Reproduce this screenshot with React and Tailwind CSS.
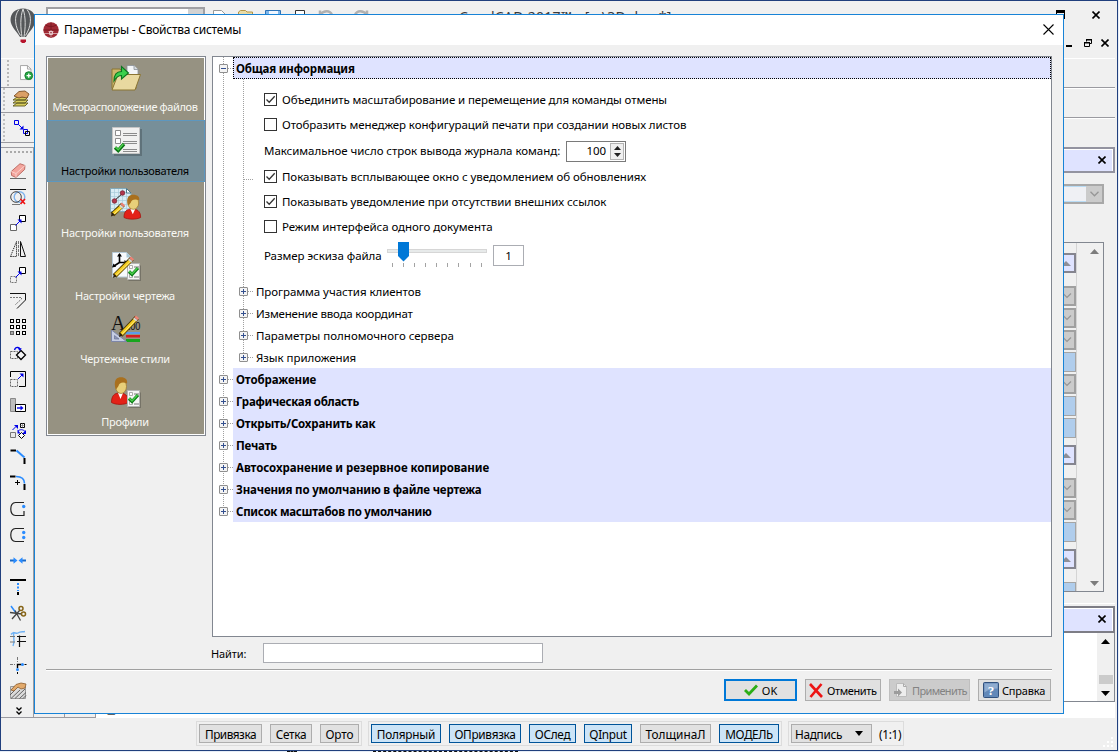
import React from "react";

const UI = "font-['Noto_Sans','Open_Sans',sans-serif]";

/* ---------- small drawing helpers ---------- */

function Icon16({ children }) {
  return (
    <svg width="16" height="16" viewBox="0 0 16 16" fill="none" className="block shrink-0 overflow-visible">
      {children}
    </svg>
  );
}

function Icon32({ children }) {
  return (
    <svg width="32" height="32" viewBox="0 0 32 32" fill="none" className="block shrink-0 overflow-visible">
      {children}
    </svg>
  );
}

const BLUE = "#0000e8";
const SKY = "#2a8cff";

/* ---------- left toolbar icons ---------- */

const toolIcons = [
  <g key="eraser">
    <path d="M0 15.5H16" stroke="#6b6b6b" />
    <path d="M10 .7 15 2.5 14.6 6.5 6 14.5 1.6 12.5 1.2 8.5Z" fill="#f3a49c" stroke="#b0584f" strokeWidth=".8" />
    <path d="M1.2 8.5 6 10.5 6 14.5 M6 10.5 15 2.5" stroke="#fbd6d1" strokeWidth=".9" />
  </g>,
  <g key="discard">
    <path d="M0 .5H16" stroke="#111" />
    <circle cx="9.5" cy="8" r="5.3" stroke="#7fb4ee" strokeWidth="1.4" />
    <circle cx="6" cy="8" r="5.3" stroke="#444" />
    <path d="M2 15.5h8" stroke="#777" />
    <path d="m10.5 10 4.5 5m0-5-4.5 5" stroke="#f01010" strokeWidth="1.6" />
  </g>,
  <g key="copy">
    <path d="M.5 9.5h6v6h-6z" fill="#fff" stroke="#666" />
    <path d="M9.5.5h6v6h-6z" fill="#fff" stroke="#000" />
    <path d="M5.5 10.5 10.5 5.5" stroke={BLUE} />
    <path d="M7.5 4.5h4v4z" fill={BLUE} />
  </g>,
  <g key="mirror">
    <path d="M.5 15.5 6.5.5V15.5z" stroke="#000" strokeDasharray="1 1" />
    <path d="M8.5 0V16" stroke="#777" strokeDasharray="3 1" />
    <path d="M10.5.5V15.5H15.5z" stroke="#111" />
  </g>,
  <g key="move">
    <path d="M.5 9.5h6v6h-6z" stroke="#777" strokeDasharray="2 1" />
    <path d="M9.5.5h6v6h-6z" fill="#fff" stroke="#000" />
    <path d="M5.5 10.5 10.5 5.5" stroke={BLUE} />
    <path d="M7.5 4.5h4v4z" fill={BLUE} />
  </g>,
  <g key="offset">
    <path d="M0 .5H15.5V7L7 15.5" stroke="#111" />
    <path d="M0 4.5H11.5V6L5 12" stroke="#777" strokeDasharray="2 1" />
  </g>,
  <g key="pattern">
    {[0, 6, 12].map((y) =>
      [0, 6, 12].map((x) => (
        <rect key={`${x}-${y}`} x={x + 0.5} y={y + 0.5} width="3" height="3" fill={x === 0 && y === 12 ? "#aaa" : "#fff"} stroke={x === 0 && y === 12 ? "#666" : "#000"} />
      ))
    )}
  </g>,
  <g key="rotate" transform="translate(0 1)">
    <path d="M.5 5.5h7v7h-7z" stroke="#666" strokeDasharray="2 1" />
    <path d="m11 4.5 4.5 4.5L11 13.500 6.500 9z" fill="#f4f4f4" stroke="#000" strokeWidth="1.300" />
    <path d="M4.500 4c1-3.500 5-3.500 5.500-.5" stroke={BLUE} strokeWidth="1.300" />
    <path d="M7.500 2.300h4.200L10 5z" fill={BLUE} />
  </g>,
  <g key="scale">
    <path d="M.5 6V.5h15v15H9" stroke="#000" />
    <path d="M.5 8.5h7v7h-7z" stroke="#666" strokeDasharray="2 1" />
    <path d="M8 8 12 4" stroke={BLUE} />
    <path d="M9.5 2.5h4v4z" fill={BLUE} />
  </g>,
  <g key="stretch">
    <path d="M.5 1.5h5v13h-5z" fill="#bdbdbd" stroke="#8a8a8a" />
    <path d="M5.5 7.5h10v7h-10z" fill="#fff" stroke="#000" />
    <path d="M7 11h4" stroke={BLUE} strokeWidth="1.4" />
    <path d="m10.5 8.5 3 2.5-3 2.5z" fill={BLUE} />
  </g>,
  <g key="transform">
    <path d="M.5 9.5h5v5h-5z" fill="#e8e8e8" stroke="#777" />
    <path d="M10.5.5h4v4h-4z" fill="#fff" stroke="#000" />
    <path d="M12.5 .5v4M10.5 2.5h4" stroke="#777" strokeWidth=".7" />
    <path d="M2.5 7 6 3.5" stroke={BLUE} />
    <path d="M4 2h4v4z" fill={BLUE} />
    <path d="m11.5 9.500 3 3-3 3-3-3z" fill="#fff" stroke="#000" />
    <path d="M8 8c2-1.800 5-1.800 7 .5" stroke={BLUE} />
    <path d="M7.500 6.500v4h3zM16 7v4h-4z" fill={BLUE} />
  </g>,
  <g key="chamfer">
    <path d="M.5 1.5H6" stroke="#000" strokeWidth="2" />
    <path d="M6.5 1.5 14.5 8.5" stroke={SKY} strokeWidth="2" />
    <path d="M14.5 9v6" stroke="#000" strokeWidth="2" />
  </g>,
  <g key="fillet">
    <path d="M0 1.5H5.5" stroke="#000" strokeWidth="2" />
    <path d="M6 1.5c6 0 8.5 2.5 8.5 7" stroke={SKY} strokeWidth="1.6" />
    <path d="M14.5 9v6" stroke="#000" strokeWidth="2" />
    <path d="M7.5 5v5M5 7.5h5" stroke="#000" />
  </g>,
  <g key="split-one">
    <path d="M14 1.5H5.5C-.8 2-.8 14 5.5 14.5H14V10" stroke="#222" strokeWidth="1.2" />
    <circle cx="13.7" cy="5.5" r="1.7" fill={SKY} />
  </g>,
  <g key="split-two">
    <path d="M14 1.5H5.5C-.8 2-.8 14 5.5 14.5H14" stroke="#222" strokeWidth="1.2" />
    <circle cx="13.7" cy="5.5" r="1.7" fill={SKY} />
    <circle cx="13.7" cy="10.5" r="1.7" fill={SKY} />
  </g>,
  <g key="weld" transform="translate(0 -.5)">
    <path d="M0 8h4M12 8h4" stroke="#1768c8" strokeWidth="2" />
    <path d="m3.500 4.700 4 3.300-4 3.300zM12.500 4.700 8.500 8l4 3.300z" fill={SKY} />
  </g>,
  <g key="extend">
    <path d="M0 1H16" stroke="#000" strokeWidth="2" />
    <path d="M8 4v8" stroke={SKY} strokeWidth="2" strokeDasharray="2 1.5" />
    <path d="M8 13v3" stroke="#000" strokeWidth="2" />
  </g>,
  <g key="trim">
    <path d="M1 1 6 8" stroke={SKY} strokeWidth="1.5" />
    <path d="M0 7.5 12 9M2 14 10 5M10.5 15.5 5 5.5" stroke="#444" strokeWidth="1.3" />
    <circle cx="11" cy="3.5" r="2" stroke="#866418" strokeWidth="1.5" />
    <circle cx="13.5" cy="9" r="2" stroke="#866418" strokeWidth="1.5" />
  </g>,
  <g key="edge-trim">
    <path d="M1 3.500c3-4 5 0 7-1.500s4-1 7-1.500M4 1c-2 5 2 6-1 14" stroke="#70b2f4" strokeWidth="1.4" />
    <path d="M7 5.5h9M7 10.5h9M9.5 4.500V16" stroke="#111" strokeWidth="1.2" />
    <path d="M0 5.5h5M0 11h5" stroke="#777" />
  </g>,
  <g key="node">
    <path d="M7.5 0v5M0 7.5h5" stroke="#777" strokeDasharray="3 1" />
    <path d="M7.5 11V7.5h4" stroke="#000" strokeWidth="1.4" />
    <path d="M14.5 7.5h2M7.5 15v2" stroke="#000" />
    <circle cx="12.5" cy="7.5" r="1.5" fill={SKY} />
    <circle cx="7.5" cy="12.5" r="1.5" fill={SKY} />
  </g>,
  <g key="hatch-edit">
    <path d="M.5 3.5h15v12H.5z" fill="#dadada" stroke="#999" />
    <path d="m0 12 5-5M1 15.5 10 7M5 15.5 15 6M9.5 15.5 16 9.5M13 15.5l3-3" stroke="#555" strokeWidth=".9" />
    <path d="M1 7 6 1.5 11 0l5 1-1 4-4 1-3-2-4 4z" fill="#e2aa6c" stroke="#8b5a2b" strokeWidth=".8" />
  </g>,
];

/* ---------- option page icons ---------- */

function Pencil({ from, to }) {
  const [x1, y1] = from;
  const [x2, y2] = to;
  return (
    <g>
      <path d={`M${x1 + 1.5} ${y1 - 2}L${x2} ${y2}`} stroke="#4c3a05" strokeWidth="5" />
      <path d={`M${x1 + 2} ${y1 - 2.5}L${x2 - 2} ${y2 + 2.4}`} stroke="#f5cd1d" strokeWidth="3.4" />
      <path d={`M${x1 + 2.4} ${y1 - 2}L${x2 - 1.6} ${y2 + 2.8}`} stroke="#fff0a0" strokeWidth=".8" />
      <path d={`M${x2 - 2.4} ${y2 + 2.8}L${x2 - 1} ${y2 + 1.2}`} stroke="#d7d7d7" strokeWidth="4" />
      <path d={`M${x2 - 1} ${y2 + 1.2}L${x2 + 0.5} ${y2 - 0.6}`} stroke="#ef8274" strokeWidth="4.2" />
      <path d={`M${x1} ${y1}L${x1 + 0.8} ${y1 - 4.5} ${x1 + 4} ${y1 - 1.8}z`} fill="#30220c" />
    </g>
  );
}

function ChecklistBadge() {
  return (
    <g>
      <path d="M18.500 14.500h12.500v15.500H18.500z" fill="#55534b" opacity=".5" />
      <path d="M17.500 12.500h12v16h-12z" fill="#f5f5f5" stroke="#b5b5b5" />
      <path d="M19.500 14.500h3v3h-3zM19.500 23.500h3v3h-3z" fill="#fff" stroke="#999" strokeWidth=".8" />
      <path d="M24 16h5M24 26h5" stroke="#777" />
      <path d="m19 20.500 3 3 6-6.500" stroke="#0c7c18" strokeWidth="3.200" />
      <path d="m19 20 3 3 5.500-6" stroke="#49cf4b" strokeWidth="1.400" />
    </g>
  );
}

function Person({ x = 0, y = 0 }) {
  return (
    <g transform={`translate(${x} ${y})`}>
      <path d="M1 25.500c0-7 3-9.500 8-9.500s9 2 9 9.500c-4 2.500-13 2.500-17 0z" fill="#e32118" stroke="#a3120d" strokeWidth=".8" />
      <path d="m7.500 16 2.500 6 2.500-6z" fill="#fff" />
      <ellipse cx="10.500" cy="9.500" rx="5.500" ry="7" fill="#e8cf79" stroke="#9b7426" strokeWidth=".7" />
      <path d="M4.500 9.500C3.500 2.500 6.500.2 10.500.2s7 2.300 6 6.300C12.500 4.500 8.500 5.500 8 9l-2.500 3.500z" fill="#a9701e" />
    </g>
  );
}

const pageIcons = {
  folder: (
    <Icon32>
      <path d="M2 6h8l2 2.500h14v17H2z" fill="#cdb66b" stroke="#8a7433" />
      <path d="M17 2.500h7l4 4V20H17z" fill="#f4f6f8" stroke="#8c9298" strokeWidth=".8" />
      <path d="M24 2.500v4h4" fill="#d5dbe0" stroke="#8c9298" strokeWidth=".8" />
      <path d="M8 11.500h22.500l-5.500 15.500H2z" fill="#e9d9a0" stroke="#8a7433" />
      <path d="M4 18c0-7 3-9.500 7.500-9.500V3.500L18.500 10l-7 6v-3.500c-4 0-5.500 2-7.500 5.500z" fill="#3bd04c" stroke="#0d7420" strokeWidth="1.1" />
    </Icon32>
  ),
  checklist: (
    <Icon32>
      <path d="M4 3h28v27H4z" fill="#47565c" opacity=".5" />
      <path d="M2.5 1.5h27v26h-27z" fill="#f1f1f0" stroke="#c4c4c4" />
      <path d="M5.5 4.5h5v5h-5zM5.5 12.5h5v5h-5z" fill="#fff" stroke="#8d8d8d" />
      <path d="M13 7.5h14M13 9.5h14M13 15.5h14M13 17.5h14M13 23.5h14M13 25.5h14" stroke="#8b8b8b" />
      <path d="m5 21.5 3.2 3L14 18" stroke="#0a7414" strokeWidth="3.4" />
      <path d="m5.3 21 3 2.7L13.3 18" stroke="#4dd04d" strokeWidth="1.4" />
    </Icon32>
  ),
  user: (
    <Icon32>
      <path d="M.5.5h16l4.5 4.500v18.500H.5z" fill="#d9edf6" stroke="#84aabb" />
      <path d="M4.500 1v22M8.500 1v22M12.500 1v22M16.500 5v18M1 4.500h19M1 8.500h19M1 12.500h19M1 16.500h19M1 20.500h19" stroke="#a7ccdb" strokeWidth=".7" />
      <path d="m16.500.5 4.500 4.500h-4.500z" fill="#fff" stroke="#4d7a8c" />
      <path d="m4 13 9-8" stroke="#222" />
      <circle cx="4.500" cy="13" r="2.300" fill="#b2374d" stroke="#701b2b" strokeWidth=".7" />
      <circle cx="12.500" cy="5" r="2.300" fill="#b2374d" stroke="#701b2b" strokeWidth=".7" />
      <g transform="translate(13 6.500) scale(.98 .9)">
        <Person />
      </g>
      <Pencil from={[1, 28.5]} to={[13, 16.5]} />
    </Icon32>
  ),
  drafting: (
    <Icon32>
      <path d="M2.5 1.5h14l5 5v19.500h-19z" fill="#f7fafc" stroke="#b7cbd8" />
      <path d="m16.5 1.500 5 5h-5z" fill="#a9c7d6" />
      <path d="M9.500 11.500V3M9.500 11.500H16M9.500 11.500 4 15" stroke="#000" strokeWidth="1.600" />
      <path d="M7 5.500 9.500 2 12 5.500zM2 16.500l1.500-4 2.700 3.200zM14.500 9l3 2.500-3 2.500z" fill="#000" />
      <ChecklistBadge />
      <Pencil from={[3, 27]} to={[22, 7.5]} />
    </Icon32>
  ),
  styles: (
    <Icon32>
      <text x="1" y="15.5" fontSize="20" fill="#111" fontFamily="Liberation Serif, serif">A</text>
      <text transform="translate(18 16) scale(.8 1)" fontSize="11.500" fill="#111" fontFamily="Liberation Sans, sans-serif">.00</text>
      <path d="M16 18h14v2H16z" fill="#5b9bea" />
      <path d="M16 21h14v2.5H16z" fill="#d61c1c" />
      <path d="M16 25h14v3H16z" fill="#18a51e" />
      <path d="M1.500 16v11.500h15z" fill="#c5cce2" stroke="#7d86a8" />
      <path d="M4.500 21.500v3.500H9z" fill="#8f97b5" stroke="#6a7396" strokeWidth=".7" />
      <Pencil from={[9, 23]} to={[27, 3.5]} />
    </Icon32>
  ),
  profiles: (
    <Icon32>
      <Person x={0.5} y={0} />
      <g transform="translate(0 1)">
        <ChecklistBadge />
      </g>
    </Icon32>
  ),
};

/* ---------- main window behind the dialog ---------- */

function Balloon() {
  return (
    <svg width="26" height="36" viewBox="0 0 26 36" fill="none" className="block">
      <path d="M13 .5C5 .5.5 5.500.5 12 .5 18 7 24 10 29h6c3-5 9.500-11 9.500-17C25.500 5.500 21 .5 13 .5z" fill="#55575a" />
      <path d="M9 1.500C3.500 8 5 19 10.500 27.500M17 1.500C22.500 8 21 19 15.500 27.500M13 1c-3 8-2.500 19-1 28M13 1c3 8 2.500 19 1 28" stroke="#d8d8d8" strokeWidth="1" />
      <path d="M10.500 31.500h5.500v2L14.500 35h-2.500l-1.500-1.500z" fill="#b7142c" />
    </svg>
  );
}

function LeftToolbars() {
  return (
    <div className="flex w-[33px] shrink-0 flex-col">
      <div className="flex h-[57px] flex-col pl-[9px] pt-[7px]">
        <Balloon />
      </div>
      <div className="flex h-[30px] items-center border-b border-[#9a9aa0] border-t border-t-white pl-[6px]">
        <div className="h-[26px] border-l-2 border-dotted border-[#b8b8b8]" />
        <svg width="16" height="18" viewBox="0 0 16 18" className="ml-[11px]" fill="none">
          <path d="M.5.5h8l4 4v12H.5z" fill="#fff" stroke="#9b9b9b" />
          <path d="M8.5.5v4h4" stroke="#9b9b9b" />
          <circle cx="10" cy="12" r="4.5" fill="#28a745" stroke="#147a2c" />
          <path d="M10 9.5v5M7.5 12h5" stroke="#fff" strokeWidth="1.5" />
        </svg>
      </div>
      <div className="flex h-[25px] items-center border-b border-[#9a9aa0] pb-[2px] pl-[2px]">
        <div className="h-[22px] border-l-2 border-dotted border-[#c0c0c0]" />
        <svg width="18" height="18" viewBox="0 0 18 18" className="ml-[7px]" fill="none">
          <path d="m1 10 4-3h11l-3 3zM1 13l4-3h11l-3 3zM1 16l4-3h11l-3 3z" fill="#d6cb5b" stroke="#5f5a20" strokeWidth=".9" />
          <path d="M2 6 7 1.5 13 1l4 3-2 4-5-1-3 1z" fill="#dba066" stroke="#7a4f25" strokeWidth=".9" />
        </svg>
      </div>
      <div className="flex h-[30px] items-center border-b border-[#9a9aa0] pl-[2px]">
        <div className="h-[27px] border-l-2 border-dotted border-[#c0c0c0]" />
        <svg width="16" height="16" viewBox="0 0 16 16" className="ml-[9px]" fill="none">
          <path d="M.5.5h4v4h-4zM9.5 9.5h4v4h-4z" stroke={BLUE} />
          <path d="M11.500 11.500h4v4h-4z" stroke="#000" />
          <path d="m4.500 4.500 4 4" stroke={BLUE} />
          <path d="M9.500 5.500v4h-4z" fill={BLUE} />
        </svg>
      </div>
      <div className="h-[5px] border-b border-[#9a9aa0]" />
      <div className="flex grow flex-col border-b border-r border-[#9a9aa0]">
        <div className="ml-[5px] mt-[3px] w-[26px] border-t-2 border-dotted border-[#aaa]" />
        <div className="flex flex-col gap-[10px] pl-[9px] pt-[10px]">
          {toolIcons.map((icon) => (
            <Icon16 key={icon.key}>{icon}</Icon16>
          ))}
        </div>
        <svg width="6" height="8" viewBox="0 0 6 8" fill="none" className="ml-[15px] mt-[8px] block">
          <path d="m.5.5 2.500 2.500L5.500.5M.5 4.500 3 7l2.500-2.500" stroke="#000" strokeWidth="1.3" />
        </svg>
      </div>
    </div>
  );
}

function TopChrome() {
  return (
    <div className="flex h-[14px] items-start pl-[12px] pt-[6px]">
      <div className="flex h-[20px] w-[159px] shrink-0 justify-end border-2 border-[#a0a0a4] bg-white">
        <div className="w-[15px] bg-[#d2d2d2]" />
      </div>
      <svg width="170" height="20" viewBox="0 0 170 20" fill="none" className="ml-[8px] shrink-0">
        <path d="M.5 20V3.500h8l4 4V20" fill="#fff" stroke="#999" />
        <path d="M25.500 20V5l2-1.500h5L34 5h5.500V20" fill="#e9dca8" stroke="#b49646" />
        <path d="M52.500 20V3.500h15V20z" fill="#7eb6ea" stroke="#2e73b6" />
        <path d="M56 4h9v5h-9z" fill="#f0f6ff" />
        <path d="M82.500 20V3.500h9V20" fill="#fff" stroke="#333" />
        <path d="M107 3.500v6M107 8c4-5 10-5 12 0" stroke="#b0b0b0" strokeWidth="2.5" />
        <path d="M154 3.500v6M154 8c-4-5-10-5-12 0" stroke="#b0b0b0" strokeWidth="2.5" />
      </svg>
      <div className="ml-[76px] mt-[3px] whitespace-pre text-[14px] leading-[14px] tracking-[0.3px] text-[#3a3a3a]">
        CorelCAD 2017™ - [...\3D.dwg*]
      </div>
    </div>
  );
}

const CloseGlyph = () => (
  <svg width="8" height="8" viewBox="0 0 8 8" fill="none" className="block shrink-0">
    <path d="m.5.5 7 7m0-7-7 7" stroke="#000" strokeWidth="1.6" />
  </svg>
);

function PaletteField({ kind }) {
  if (kind === "head") {
    return (
      <div className="flex h-[20px] shrink-0 items-center border-2 border-l-0 border-[#85858f] bg-[#dfe3ff]">
        <svg width="8" height="5" viewBox="0 0 8 5" className="block">
          <path d="M3 0 8 5H0V3z" fill="#8e8e96" />
        </svg>
      </div>
    );
  }
  if (kind === "edit") {
    return <div className="h-[20px] shrink-0 border border-l-0 border-[#a5a5a5] bg-[#b0cdec]" />;
  }
  return (
    <div className="flex h-[20px] shrink-0 items-center border-2 border-l-0 border-[#a0a0a0] bg-[#cbcbcb]">
      <svg width="9" height="6" viewBox="0 0 9 6" fill="none" className="block">
        <path d="m0 .5 4 4 4-4" stroke="#969696" strokeWidth="1.2" />
      </svg>
    </div>
  );
}

function RightDock() {
  return (
    <div className="flex w-[54px] shrink-0 flex-col pr-[2px]">
      <div className="flex h-[29px] items-start pl-[29px] pt-[10px]">
        <CloseGlyph />
      </div>
      <div className="flex h-[28px] items-start pl-[3px] pt-[9px]">
        <div className="mt-[6px] h-[2px] w-[6px] bg-black" />
        <svg width="8" height="8" viewBox="0 0 8 8" fill="none" className="ml-[12px] block overflow-visible">
          <path d="M2.500 2.500v-2h5v4h-2M.5 3.500h5v4h-5z" stroke="#000" />
          <path d="M2 .7h6M0 3.700h6" stroke="#000" strokeWidth="1.5" />
        </svg>
        <div className="ml-[9px]">
          <CloseGlyph />
        </div>
      </div>
      <div className="h-[30px] shrink-0 border-b border-t border-b-[#9a9aa0] border-t-white" />
      <div className="h-[30px] shrink-0 border-b border-t border-b-[#9a9aa0] border-t-white" />
      <div className="h-[29px] shrink-0 border-t border-t-white" />
      <div className="flex h-[26px] shrink-0 items-center justify-end border-2 border-l-0 border-[#9393a0] bg-[#dfe3ff] pb-px pr-[7px] shadow-[inset_-1px_1px_0_#fff]">
        <CloseGlyph />
      </div>
      <div className="mr-[11px] mt-[11px] flex h-[20px] shrink-0 items-stretch justify-end border-2 border-l-0 border-[#a8a8a8] bg-[#eff0f4] shadow-[inset_0_1px_0_#b9dcf5,inset_0_-1px_0_#b9dcf5]">
        <div className="flex w-[16px] items-center justify-center bg-[#cbcbcb]">
          <svg width="9" height="6" viewBox="0 0 9 6" fill="none">
            <path d="m.5.8 4 4 4-4" stroke="#969696" strokeWidth="1.3" />
          </svg>
        </div>
      </div>
      <div className="mr-[11px] mt-[38px] flex h-[350px] shrink-0 border border-l-0 border-[#828790]">
        <div className="flex w-[14px] flex-col overflow-hidden border-r border-[#d4d4d4] pt-[10px]">
          <PaletteField kind="head" />
          <div className="mt-[13px] flex flex-col gap-[2px]">
            {["combo", "combo", "combo", "edit", "combo", "edit", "edit"].map((k, i) => (
              <PaletteField key={i} kind={k} />
            ))}
          </div>
          <div className="mt-[7px]">
            <PaletteField kind="head" />
          </div>
          <div className="mt-[13px] flex flex-col gap-[2px]">
            {["combo", "combo", "edit"].map((k, i) => (
              <PaletteField key={i} kind={k} />
            ))}
          </div>
          <div className="mt-[7px]">
            <PaletteField kind="head" />
          </div>
          <div className="mt-[13px]">
            <PaletteField kind="edit" />
          </div>
        </div>
        <div className="flex w-[26px] flex-col items-center justify-between pb-[5px] pl-[9px] pt-[6px]">
          <svg width="9" height="5" viewBox="0 0 9 5">
            <path d="m4.500 0 4.500 5H0z" fill="#7c7c7c" />
          </svg>
          <svg width="9" height="5" viewBox="0 0 9 5">
            <path d="M0 0h9L4.500 5z" fill="#7c7c7c" />
          </svg>
        </div>
      </div>
      <div className="mt-[11px] h-px bg-white" />
      <div className="mt-[2px] flex h-[27px] shrink-0 items-center justify-end border-2 border-l-0 border-[#7d7d86] bg-[#dfe3ff] pb-[2px] pr-[7px] shadow-[inset_-1px_1px_0_#fff]">
        <CloseGlyph />
      </div>
      <div className="flex h-[69px] shrink-0 justify-end border-b border-r border-[#828790] bg-white">
        <div className="flex w-[17px] flex-col items-center bg-[#f0f0f0] pt-[6px]">
          <svg width="9" height="5" viewBox="0 0 9 5" className="shrink-0">
            <path d="m4.500 0 4.500 5H0z" fill="#000" />
          </svg>
          <div className="mt-[31px] h-[9px] w-[14px] shrink-0 bg-[#cbcbcb]" />
          <svg width="9" height="5" viewBox="0 0 9 5" className="mt-[7px] shrink-0">
            <path d="M0 0h9L4.500 5z" fill="#000" />
          </svg>
        </div>
      </div>
      <div className="grow bg-white" />
    </div>
  );
}

const statusOff = "flex items-center justify-center border border-[#adadad] bg-[#e1e1e1] whitespace-nowrap";
const statusOn = "flex items-center justify-center border border-[#005499] bg-[#cce4f7] whitespace-nowrap pt-px";

function StatusBar() {
  return (
    <div className="flex h-[32px] shrink-0 items-start pl-[195px] pt-[3px] text-[11.8px] leading-[16px] tracking-[-0.3px] text-black">
      <div className="flex h-[25px] w-[166px] gap-[8px] border border-[#dcdcdc] px-[2px] py-[2px]">
        <div className={`${statusOff} w-[63px] tracking-[-0.5px]`}>Привязка</div>
        <div className={`${statusOff} w-[42px]`}>Сетка</div>
        <div className={`${statusOff} w-[39px] tracking-[-0.1px]`}>Орто</div>
      </div>
      <div className="ml-[6px] flex h-[25px] w-[414px] gap-[8px] border border-[#dcdcdc] px-[2px] py-[2px]">
        <div className={`${statusOn} w-[70px] tracking-[-0.2px]`}>Полярный</div>
        <div className={`${statusOn} w-[72px]`}>ОПривязка</div>
        <div className={`${statusOn} w-[47px]`}>ОСлед</div>
        <div className={`${statusOn} w-[48px]`}>QInput</div>
        <div className={`${statusOff} w-[71px] tracking-[0px]`}>ТолщинаЛ</div>
        <div className={`${statusOn} w-[60px] tracking-[-0.4px]`}>МОДЕЛЬ</div>
      </div>
      <div className="ml-[6px] flex h-[25px] w-[116px] items-stretch border border-[#dcdcdc] px-[2px] py-[2px]">
        <div className="flex w-[81px] shrink-0 items-center justify-between border border-[#adadad] bg-[#e1e1e1] pl-[3px] pr-[8px]">
          <span className="pt-px">Надпись</span>
          <svg width="8" height="5" viewBox="0 0 8 5">
            <path d="M0 0h8L4 5z" fill="#000" />
          </svg>
        </div>
        <span className="ml-[7px] flex items-center">(1:1)</span>
      </div>
      <svg width="12" height="12" viewBox="0 0 12 12" className="ml-auto mr-[3px] mt-[16px]">
        <path d="M9 0h2v2H9zM5 4h2v2H5zM9 4h2v2H9zM1 8h2v2H1zM5 8h2v2H5zM9 8h2v2H9z" fill="#fff" />
      </svg>
    </div>
  );
}

function MainWindow() {
  return (
    <div className="flex h-[751px] w-[1118px] flex-col border border-[#203f7d] bg-[#f0f0f0]">
      <div className="flex h-[717px] shrink-0">
        <LeftToolbars />
        <div className="flex w-[1029px] flex-col justify-between">
          <div className="flex">
            <TopChrome />
            <div className="grow" />
            <div className="mr-[-2px] mt-[9px] h-[9px] w-[9px] border border-t-[3px] border-black" />
          </div>
          <div className="flex h-[16px] items-stretch">
            <div className="w-[31px] border-b border-r border-[#9a9aa0]" />
            <div className="w-[31px] border-b border-r border-[#9a9aa0]" />
            <div className="flex grow items-end bg-white pl-[4px] font-['Liberation_Mono',monospace] text-[12.5px] leading-[14px]">
              <span className="pb-px text-[#111]">F_OPTIONS</span>
            </div>
          </div>
        </div>
        <RightDock />
      </div>
      <StatusBar />
    </div>
  );
}

/* ---------- options dialog ---------- */

const pages = [
  { icon: "folder", label: "Месторасположение файлов" },
  { icon: "checklist", label: "Настройки пользователя" },
  { icon: "user", label: "Настройки пользователя" },
  { icon: "drafting", label: "Настройки чертежа" },
  { icon: "styles", label: "Чертежные стили" },
  { icon: "profiles", label: "Профили" },
];

const pageBox = {
  folder: "h-[62px] pt-[5px] gap-[5px] text-[#f8f8f4] tracking-[-0.38px]",
  checklist: "-mx-px h-[62px] border border-[#5d97bf] bg-[#778f99] pt-[5px] gap-[6px] text-black tracking-[-0.28px]",
};

const pageBoxDefault = "h-[63px] pt-[6px] gap-[6px] text-[#f8f8f4] tracking-[-0.28px]";

function PageList() {
  return (
    <div className="flex h-[380px] w-[160px] shrink-0 flex-col border border-[#828790] bg-white p-px text-[11px] leading-[14px]">
      <div className="flex grow flex-col bg-[#969282]">
        {pages.map((p) => (
          <div key={p.icon} className={`flex shrink-0 flex-col items-center ${pageBox[p.icon] || pageBoxDefault}`}>
            {pageIcons[p.icon]}
            <span className="-ml-[2px] whitespace-nowrap">{p.label}</span>
          </div>
        ))}
      </div>
    </div>
  );
}

function Expander({ open = false }) {
  return (
    <svg width="9" height="9" viewBox="0 0 9 9" fill="none" className="relative block shrink-0">
      <rect x=".5" y=".5" width="8" height="8" rx=".5" fill="#f4f4f4" stroke="#8f8f8f" />
      <path d="M2 4.5h5" stroke="#34508f" />
      {!open && <path d="M4.5 2v5" stroke="#34508f" />}
    </svg>
  );
}

const Stub = () => <div className="w-[5px] shrink-0 border-t border-dotted border-[#a0a0a0]" />;

function Guide({ className = "" }) {
  return <div className={`absolute border-l border-dotted border-[#a0a0a0] ${className}`} />;
}

function CheckRow({ checked, children, className = "" }) {
  return (
    <div className={`flex h-[13px] items-center gap-[5px] ${className}`}>
      <svg width="13" height="13" viewBox="0 0 13 13" fill="none" className="block shrink-0">
        <rect x=".5" y=".5" width="12" height="12" fill="#fff" stroke="#333" />
        {checked && <path d="m2.500 6.500 2.700 2.800 5.500-6" stroke="#333" strokeWidth="1.3" />}
      </svg>
      <span className="whitespace-nowrap">{children}</span>
    </div>
  );
}

function GeneralEditor() {
  return (
    <div className="relative flex h-[201px] flex-col pl-[51px] pt-[14px]">
      <Guide className="left-[30px] top-0 h-[201px]" />
      <div className="absolute left-[31px] top-[100px] w-[9px] border-t border-dotted border-[#a0a0a0]" />
      <CheckRow checked className="tracking-[-0.11px]">Объединить масштабирование и перемещение для команды отмены</CheckRow>
      <CheckRow className="mt-[12px] tracking-[-0.09px]">Отобразить менеджер конфигураций печати при создании новых листов</CheckRow>
      <div className="mt-[9px] flex h-[22px] items-center">
        <span className="w-[296px] whitespace-nowrap tracking-[-0.04px]">Максимальное число строк вывода журнала команд:</span>
        <div className="ml-[6px] flex h-[21px] w-[60px] items-center justify-end border border-[#7a7a7a] bg-white pr-px">
          <span className="mr-[4px] tracking-[-0.1px]">100</span>
          <div className="flex h-[17px] w-[14px] flex-col items-center justify-center gap-[3px] border border-[#b4b4b4] bg-[#f0f0f0]">
            <svg width="7" height="4" viewBox="0 0 7 4">
              <path d="M3.500 0 7 4H0z" fill="#222" />
            </svg>
            <svg width="7" height="4" viewBox="0 0 7 4">
              <path d="M0 0h7L3.500 4z" fill="#222" />
            </svg>
          </div>
        </div>
      </div>
      <CheckRow checked className="mt-[8px] tracking-[-0.06px]">Показывать всплывающее окно с уведомлением об обновлениях</CheckRow>
      <CheckRow checked className="mt-[12px] tracking-[-0.06px]">Показывать уведомление при отсутствии внешних ссылок</CheckRow>
      <CheckRow className="mt-[12px] tracking-[-0.06px]">Режим интерфейса одного документа</CheckRow>
      <div className="mt-[8px] flex h-[27px] items-center">
        <span className="w-[123px] whitespace-nowrap pt-[3px] tracking-[-0.05px]">Размер эскиза файла</span>
        <svg width="101" height="27" viewBox="0 0 101 27" fill="none" className="block">
          <rect x=".5" y="8.5" width="99" height="3" fill="#e7eaea" stroke="#d6d6d6" />
          <path d="M5.500 22v4M16.500 22v4M27.500 22v4M38.500 22v4M49.500 22v4M60.500 22v4M71.500 22v4M83.500 22v4M94.500 22v4" stroke="#a3a3a3" />
          <path d="M11 1h11v14l-5.500 5.500L11 15z" fill="#0078d7" />
        </svg>
        <div className="ml-[5px] mt-[2px] flex h-[21px] w-[31px] items-center justify-center border border-[#abadb3] bg-white">1</div>
      </div>
    </div>
  );
}

const subSections = [
  ["Программа участия клиентов", "tracking-[-0.06px]"],
  ["Изменение ввода координат", "tracking-[-0.2px]"],
  ["Параметры полномочного сервера", ""],
  ["Язык приложения", "tracking-[-0.05px]"],
];

const sections = [
  ["Отображение", "tracking-[-0.1px]"],
  ["Графическая область", "tracking-[-0.27px]"],
  ["Открыть/Сохранить как", "tracking-[-0.18px]"],
  ["Печать", "tracking-[-0.2px]"],
  ["Автосохранение и резервное копирование", "tracking-[-0.07px]"],
  ["Значения по умолчанию в файле чертежа", "tracking-[-0.16px]"],
  ["Список масштабов по умолчанию", "tracking-[-0.27px]"],
];

function OptionsTree() {
  return (
    <div className="relative flex h-[581px] w-[840px] flex-col border border-[#828790] bg-white text-[11.5px] leading-[16px] text-black">
      <Guide className="left-[10px] top-0 h-[455px]" />
      <div className="flex h-[22px] items-center pl-[6px]">
        <Expander open />
        <Stub />
        <div className="flex h-full grow items-center border border-dotted border-black bg-[#dfe3ff] pl-[2px] pt-[2px] font-bold tracking-[-0.18px]">
          Общая информация
        </div>
      </div>
      <GeneralEditor />
      <div className="relative flex flex-col pl-[26px]">
        <Guide className="left-[30px] top-0 h-[77px]" />
        {subSections.map(([s, track]) => (
          <div key={s} className="flex h-[22px] items-center">
            <Expander />
            <Stub />
            <span className={`pl-[3px] pt-[2px] ${track}`}>{s}</span>
          </div>
        ))}
      </div>
      {sections.map(([s, track]) => (
        <div key={s} className="flex h-[22px] items-center pl-[6px]">
          <Expander />
          <Stub />
          <div className={`flex h-full grow items-center bg-[#dfe3ff] pl-[3px] pt-[2px] font-bold ${track}`}>{s}</div>
        </div>
      ))}
    </div>
  );
}

function DialogButtons() {
  return (
    <div className="flex h-[22px] items-stretch justify-end gap-[8px] pr-[12px] text-[11px] leading-[16px]">
      <button className="flex w-[73px] items-center justify-center gap-[4px] border-2 border-[#0078d7] bg-[#e1e1e1]">
        <svg width="14" height="12" viewBox="0 0 14 12" fill="none">
          <path d="m1 6 4 4L13 1.500" stroke="#2cae17" strokeWidth="2.8" />
        </svg>
        <span className="pt-px">OK</span>
      </button>
      <button className="flex w-[76px] items-center gap-[4px] border border-[#adadad] bg-[#e1e1e1] pl-[3px]">
        <svg width="14" height="15" viewBox="0 0 14 15" fill="none" className="shrink-0">
          <path d="m1 1 12 13M12.500 1 1.500 14" stroke="#ed1515" strokeWidth="2.6" />
        </svg>
        <span className="pt-[2px] tracking-[-0.4px]">Отменить</span>
      </button>
      <button className="flex w-[81px] items-center gap-[4px] border border-[#bfbfbf] bg-[#cccccc] pl-[4px] text-[#838383]">
        <svg width="14" height="15" viewBox="0 0 14 15" fill="none" className="shrink-0">
          <path d="M2.500.5h7l3 3v10h-10z" fill="#ededed" stroke="#bcbcbc" />
          <path d="M9.500.5v3h3" stroke="#aaa" />
          <path d="M0 8h4V5.500l4 4-4 4V11H0z" fill="#9c9c9c" />
        </svg>
        <span className="pt-[2px] tracking-[-0.65px]">Применить</span>
      </button>
      <button className="flex w-[73px] items-center gap-[3px] border border-[#adadad] bg-[#e1e1e1] pl-[4px]">
        <svg width="16" height="16" viewBox="0 0 16 16" className="shrink-0">
          <rect x=".5" y=".5" width="15" height="15" rx="1" fill="#6288b8" stroke="#31517e" />
          <path d="M1.500 1.500h13v5c-5 0-9 1-13 4z" fill="#8facd0" />
          <text x="8" y="13" fontSize="13" fontWeight="bold" fill="#fff" textAnchor="middle" fontFamily="Liberation Serif, serif">?</text>
        </svg>
        <span className="pt-[2px] tracking-[-0.2px]">Справка</span>
      </button>
    </div>
  );
}

function OptionsDialog() {
  return (
    <div className="absolute left-[34px] top-[14px] flex h-[700px] w-[1030px] flex-col border border-[#1883d7] bg-[#f0f0f0]">
      <div className="flex h-[30px] shrink-0 items-center bg-white pl-[8px] pr-[9px]">
        <svg width="16" height="16" viewBox="0 0 16 16" fill="none" className="-mt-px">
          <circle cx="8" cy="8" r="7.7" fill="#a02a35" />
          <path d="M8 .5v15M.5 8h15M2.500 3c3 2 8 2 11 0" stroke="#7c1822" />
          <path d="M5.500 9.500h5M8 8v7M1 11.500h14" stroke="#e8c8cb" strokeWidth=".7" />
          <path d="M6.500 9.500h3v3h-3z" stroke="#e8c8cb" />
        </svg>
        <span className="ml-[5px] whitespace-nowrap text-[12px] tracking-[-0.25px] text-black">Параметры - Свойства системы</span>
        <svg width="11" height="11" viewBox="0 0 11 11" fill="none" className="-mt-[2px] ml-auto">
          <path d="m.5.5 10 10m0-10-10 10" stroke="#000" strokeWidth="1.1" />
        </svg>
      </div>
      <div className="flex gap-[6px] pl-[11px] pt-[11px]">
        <PageList />
        <OptionsTree />
      </div>
      <div className="flex h-[32px] items-center pl-[176px] text-[11px]">
        <span className="w-[52px] pt-[2px] tracking-[-0.1px]">Найти:</span>
        <div className="h-[20px] w-[280px] border border-[#abadb3] bg-white" />
      </div>
      <div className="ml-[11px] mr-[11px] border-b border-t border-b-white border-t-[#a0a0a0]" />
      <div className="h-[8px]" />
      <DialogButtons />
    </div>
  );
}

export default function App() {
  return (
    <div className={`relative h-[752px] w-[1119px] overflow-hidden bg-[#e6edf6] ${UI}`}>
      <MainWindow />
      <div className="flex h-px items-start">
        <div className="ml-[287px] w-[10px] border-t border-dashed border-[#111]" />
        <div className="ml-[76px] w-[145px] border-t border-dashed border-[#111]" />
      </div>
      <OptionsDialog />
    </div>
  );
}
